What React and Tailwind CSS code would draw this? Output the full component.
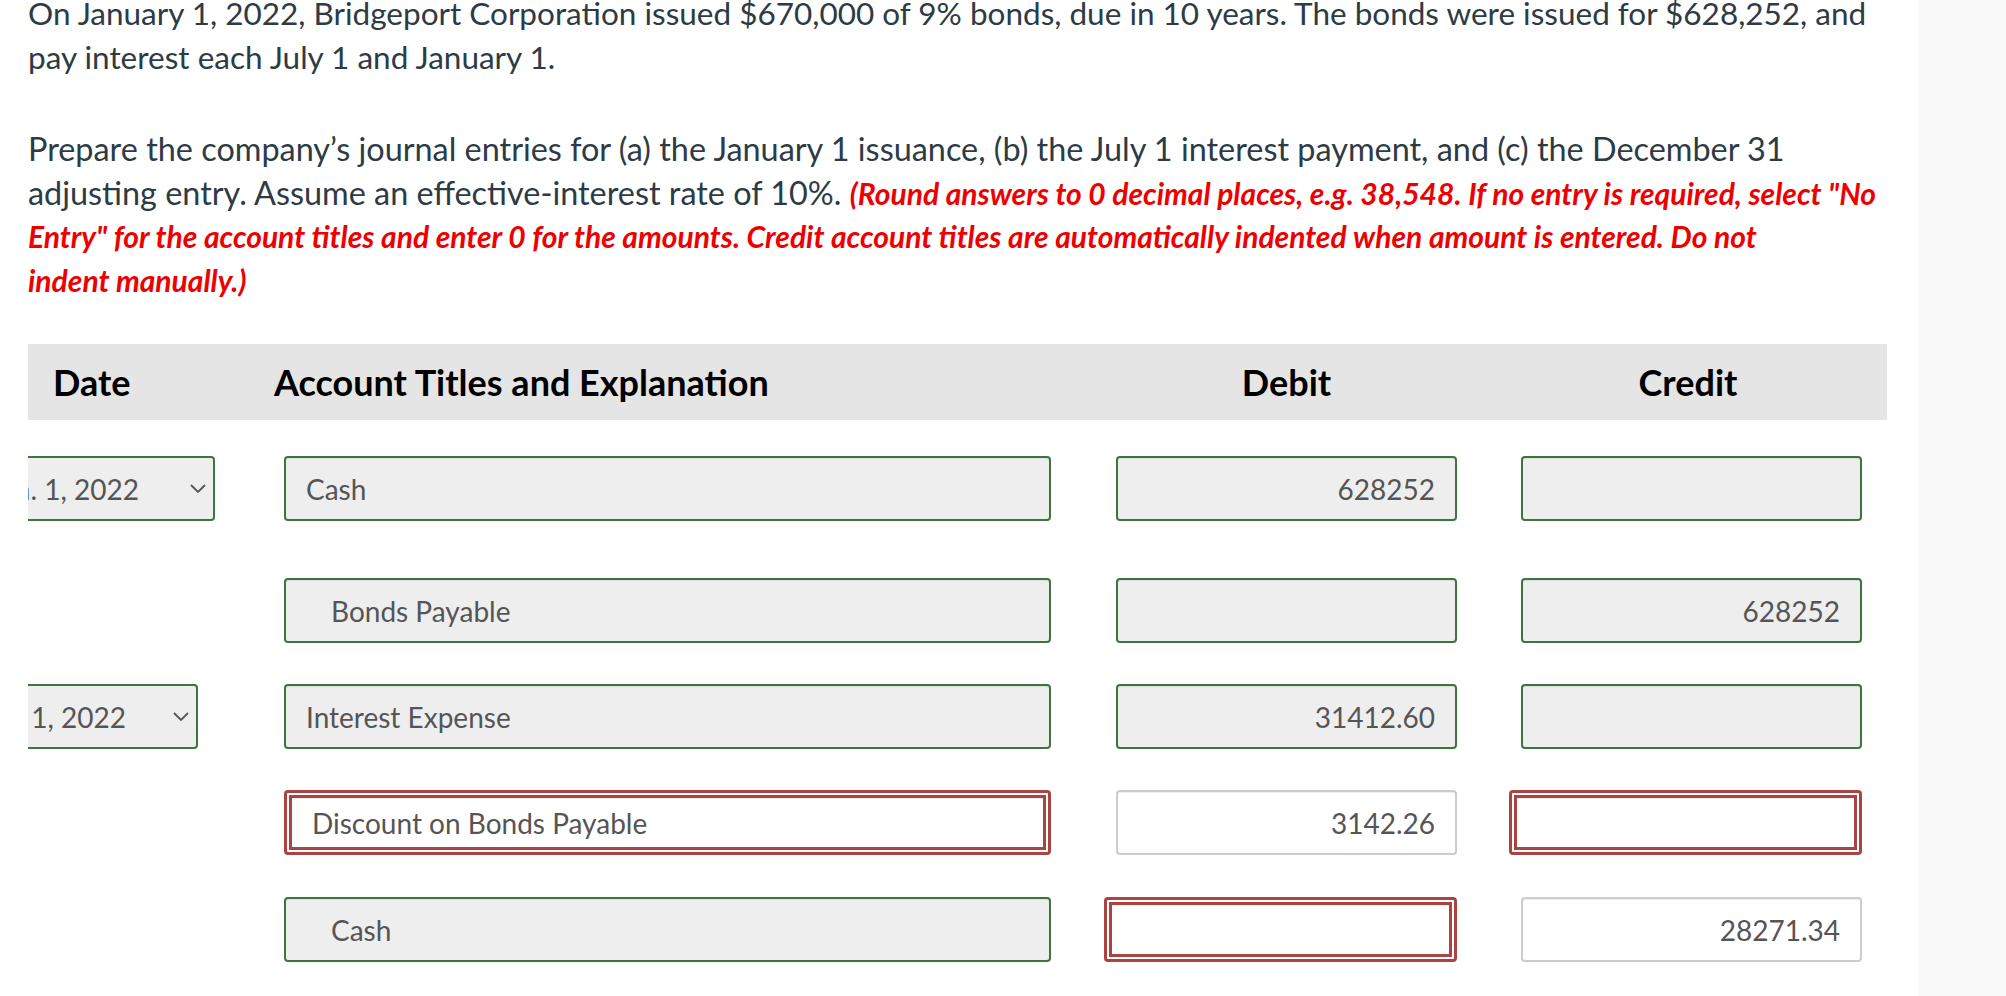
import React from 'react';

const FONT = "font-[family-name:Lato,'Liberation_Sans',sans-serif]";

const BOX = {
  green: 'border-2 border-[#3c763d] bg-[#eeeeee]',
  red: 'border-[8px] border-double border-[#a94442] bg-white',
  plain: 'border-2 border-[#cccccc] bg-white',
};

const ROWS = [
  { date: 'Jan. 1, 2022', dateW: 'w-[187px]', dateGap: 'gap-[51px]', gap: 'mt-[36px]',
    acct: { text: 'Cash', kind: 'green' },
    debit: { text: '628252', kind: 'green' }, credit: { text: '', kind: 'green' } },
  { gap: 'mt-[57px]',
    acct: { text: 'Bonds Payable', kind: 'green', indent: true },
    debit: { text: '', kind: 'green' }, credit: { text: '628252', kind: 'green' } },
  { date: 'Jul. 1, 2022', dateW: 'w-[170px]', dateGap: 'gap-[47px]', gap: 'mt-[41px]',
    acct: { text: 'Interest Expense', kind: 'green' },
    debit: { text: '31412.60', kind: 'green' }, credit: { text: '', kind: 'green' } },
  { gap: 'mt-[41px]',
    acct: { text: 'Discount on Bonds Payable', kind: 'red' },
    debit: { text: '3142.26', kind: 'plain' }, credit: { text: '', kind: 'red' } },
  { gap: 'mt-[42px]',
    acct: { text: 'Cash', kind: 'green', indent: true },
    debit: { text: '', kind: 'red' }, credit: { text: '28271.34', kind: 'plain' } },
];

function Chevron() {
  return (
    <svg width="16" height="9" viewBox="0 0 16 9" className="shrink-0">
      <path d="M1 1 L8 8 L15 1" fill="none" stroke="#555" strokeWidth="1.8" />
    </svg>
  );
}

function DateSelect({ value, width, gap }) {
  // the select is scrolled off the left edge, so only its right part shows
  return (
    <div className={`${width} h-[65px] overflow-hidden flex justify-end`}>
      <div className={`${BOX.green} ${gap} shrink-0 h-full rounded-[4px] flex items-center pl-[14px] pr-[7px] text-[28px] text-[#555]`}>
        <span className="whitespace-nowrap">{value}</span>
        <Chevron />
      </div>
    </div>
  );
}

function Amount({ cell }) {
  const w = cell.kind === 'red' ? 'w-[353px]' : 'w-[341px]';
  return (
    <div className={`${BOX[cell.kind]} ${w} h-[65px] rounded-[4px] flex items-center justify-end pr-[20px] text-[28px] text-[#555] shadow-[inset_0_1px_1px_rgba(0,0,0,0.075)]`}>
      {cell.text}
    </div>
  );
}

export default function App() {
  return (
    <div className={`${FONT} flex min-h-screen bg-white`}>
      <main className="w-[1918px] shrink-0 pl-[28px] pr-[28px] overflow-hidden">
        <p className="mt-[-8px] text-[31.5px] leading-[43.5px] text-[#2d3b45]">
          On January 1, 2022, Bridgeport Corporation issued $670,000 of 9% bonds, due in 10 years. The bonds were issued for $628,252, and<br />
          pay interest each July 1 and January 1.
        </p>
        <p className="mt-[48px] text-[32.4px] leading-[43.5px] text-[#2d3b45]">
          Prepare the company’s journal entries for (a) the January 1 issuance, (b) the July 1 interest payment, and (c) the December 31<br />
          adjusting entry. Assume an effective-interest rate of 10%.{' '}
          <span className="text-[30px] leading-[1] font-bold italic text-[#ee0000]">
            (Round answers to 0 decimal places, e.g. 38,548. If no entry is required, select "No<br />
            Entry" for the account titles and enter 0 for the amounts. Credit account titles are automatically indented when amount is entered. Do not<br />
            indent manually.)
          </span>
        </p>

        <div className="w-[1859px] mt-[43px]">
          <div className="grid grid-cols-[221px_835px_405px_398px] h-[76px] items-center bg-[#e5e5e5] text-[36px] font-bold text-black">
            <div className="pl-[25px]">Date</div>
            <div className="pl-[25px]">Account Titles and Explanation</div>
            <div className="text-center">Debit</div>
            <div className="text-center">Credit</div>
          </div>

          {ROWS.map((r, i) => (
            <div key={i} className={`grid grid-cols-[221px_835px_405px_398px] ${r.gap}`}>
              <div>{r.date && <DateSelect value={r.date} width={r.dateW} gap={r.dateGap} />}</div>
              <div className="pl-[35px]">
                <div className={`${BOX[r.acct.kind]} w-[767px] h-[65px] rounded-[4px] flex items-center ${r.acct.indent ? 'pl-[45px]' : 'pl-[20px]'} text-[28px] text-[#555] shadow-[inset_0_1px_1px_rgba(0,0,0,0.075)]`}>
                  {r.acct.text}
                </div>
              </div>
              <div className="flex justify-end pr-[32px]">
                <Amount cell={r.debit} />
              </div>
              <div className="flex justify-end pr-[25px]">
                <Amount cell={r.credit} />
              </div>
            </div>
          ))}
        </div>
      </main>
      <aside className="flex-1 bg-[#f9f9f9]" />
    </div>
  );
}
